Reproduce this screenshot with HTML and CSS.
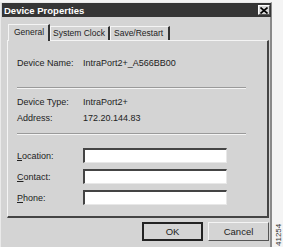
FILE: index.html
```html
<!DOCTYPE html>
<html>
<head>
<meta charset="utf-8">
<link rel="stylesheet" href="styles.css">
</head>
<body>
<div class="dialog">
  <div class="titlebar">
    <span class="title">Device Properties</span>
    <span class="close"><svg width="8" height="7" viewBox="0 0 8 7"><path d="M0.5 0.5 L7.5 6.5 M7.5 0.5 L0.5 6.5" stroke="#000" stroke-width="1.6"/></svg></span>
  </div>
  <div class="tabs">
    <div class="tab active t1">General</div>
    <div class="tab t2">System Clock</div>
    <div class="tab t3">Save/Restart</div>
  </div>
  <div class="panel">
    <div class="row first"><span class="label">Device Name:</span><span class="value">IntraPort2+_A566BB00</span></div>
    <div class="sep s1"></div>
    <div class="row"><span class="label">Device Type:</span><span class="value">IntraPort2+</span></div>
    <div class="row"><span class="label">Address:</span><span class="value">172.20.144.83</span></div>
    <div class="sep s2"></div>
    <div class="frow"><span class="label"><u>L</u>ocation:</span><span class="field"></span></div>
    <div class="frow"><span class="label"><u>C</u>ontact:</span><span class="field"></span></div>
    <div class="frow"><span class="label"><u>P</u>hone:</span><span class="field"></span></div>
  </div>
  <div class="buttons">
    <div class="btn default">OK</div>
    <div class="btn">Cancel</div>
  </div>
</div>
<div class="figno">41254</div>
</body>
</html>
```
FILE: styles.css
```css
html, body { margin: 0; padding: 0; background: #f4f4f4; }
body {
  font-family: "Liberation Sans", Arial, sans-serif;
  font-size: 9px;
  color: #222;
  position: relative;
  width: 283px;
  height: 247px;
  overflow: hidden;
}
.dialog {
  margin-top: 2px;
  width: 272px;
  height: 245px;
  box-sizing: border-box;
  background: #d4d4d4;
  border-left: 1px solid #eaeaea;
  border-top: 1px solid #eaeaea;
  border-right: 2px solid #8a8a8a;
  padding: 0 0 0 1px;
}
.titlebar {
  height: 14px;
  background: #363636;
  color: #fff;
  display: flex;
  align-items: center;
  justify-content: space-between;
  padding: 0 0 0 2px;
  margin-right: -1px;
}
.title { font-weight: bold; font-size: 9.5px; }
.close {
  width: 12px; height: 10px;
  background: #d8d8d8;
  border: 1px solid;
  border-color: #fff #555 #555 #fff;
  box-sizing: border-box;
  display: flex; align-items: center; justify-content: center;
  margin-right: 1px;
}
.tabs {
  display: flex;
  margin-top: 7px;
  padding-left: 6px;
  height: 16px;
  align-items: flex-end;
}
.tab {
  height: 14px;
  line-height: 13px;
  box-sizing: border-box;
  border-top: 1px solid #f4f4f4;
  border-left: 1px solid #f4f4f4;
  border-right: 2px solid #333;
  font-size: 8.5px;
  white-space: nowrap;
}
.t1 { width: 42px; padding-left: 5px; }
.t2 { width: 60px; padding-left: 2px; }
.t3 { width: 60px; padding-left: 3px; }
.tab.active {
  height: 17px;
  line-height: 15px;
  margin-bottom: -1px;
  background: #d4d4d4;
  position: relative;
  z-index: 1;
}
.panel {
  margin: 0 0 0 5px;
  width: 262px;
  height: 178px;
  box-sizing: border-box;
  border-top: 1px solid #f4f4f4;
  border-left: 1px solid #f4f4f4;
  border-right: 2px solid #444;
  border-bottom: 2px solid #444;
  padding: 0 0 0 9px;
}
.row { display: flex; height: 16px; align-items: center; }
.row.first { margin-top: 14px; }
.label { width: 66px; flex: none; }
.sep {
  width: 229px;
  height: 0;
  border-top: 1px solid #9a9a9a;
  border-bottom: 1px solid #f4f4f4;
}
.s1 { margin: 16px 0 5px; }
.s2 { margin: 7px 0 13px; }
.frow { display: flex; align-items: center; height: 15px; margin-bottom: 6px; }
.field {
  width: 144px; height: 15px;
  box-sizing: border-box;
  background: #fff;
  border: 1px solid;
  border-color: #444 #e8e8e8 #e8e8e8 #444;
  border-top-width: 2px;
  border-left-width: 2px;
}
.buttons {
  display: flex;
  justify-content: flex-end;
  gap: 5px;
  margin-top: 4px;
  width: 267px;
}
.btn {
  width: 61px; height: 19px;
  box-sizing: border-box;
  border: 1px solid;
  border-color: #f4f4f4 #555 #555 #f4f4f4;
  display: flex; align-items: center; justify-content: center;
  font-size: 9.5px;
}
.btn.default { border: 2px solid #222; }
.figno {
  position: absolute;
  left: 275px;
  top: 246px;
  width: 28px;
  font-size: 8px;
  line-height: 8px;
  transform: rotate(-90deg);
  transform-origin: left top;
  color: #333;
}
```
